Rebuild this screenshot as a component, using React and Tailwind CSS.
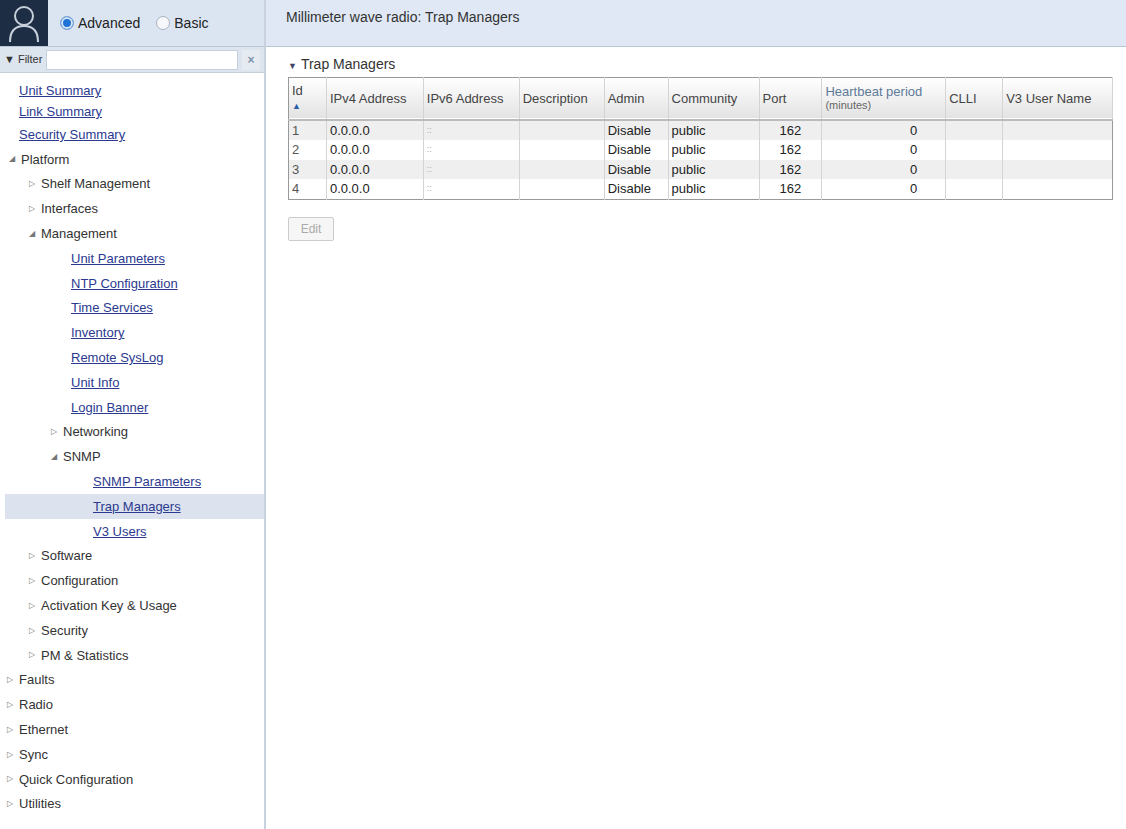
const tree = [
  { t: "Unit Summary", l: 14, link: true, h: 20 },
  { t: "Link Summary", l: 14, link: true, h: 22 },
  { t: "Security Summary", l: 14, link: true, h: 24 },
  { t: "Platform", l: 4, open: true },
  { t: "Shelf Management", l: 24, closed: true },
  { t: "Interfaces", l: 24, closed: true },
  { t: "Management", l: 24, open: true },
  { t: "Unit Parameters", l: 66, link: true },
  { t: "NTP Configuration", l: 66, link: true },
  { t: "Time Services", l: 66, link: true },
  { t: "Inventory", l: 66, link: true },
  { t: "Remote SysLog", l: 66, link: true },
  { t: "Unit Info", l: 66, link: true },
  { t: "Login Banner", l: 66, link: true },
  { t: "Networking", l: 46, closed: true },
  { t: "SNMP", l: 46, open: true },
  { t: "SNMP Parameters", l: 88, link: true },
  { t: "Trap Managers", l: 88, link: true, sel: true },
  { t: "V3 Users", l: 88, link: true },
  { t: "Software", l: 24, closed: true },
  { t: "Configuration", l: 24, closed: true },
  { t: "Activation Key & Usage", l: 24, closed: true },
  { t: "Security", l: 24, closed: true },
  { t: "PM & Statistics", l: 24, closed: true },
  { t: "Faults", l: 2, closed: true },
  { t: "Radio", l: 2, closed: true },
  { t: "Ethernet", l: 2, closed: true },
  { t: "Sync", l: 2, closed: true },
  { t: "Quick Configuration", l: 2, closed: true },
  { t: "Utilities", l: 2, closed: true },
];

const cols = [
  ["Id", 38], ["IPv4 Address", 97], ["IPv6 Address", 96], ["Description", 85], ["Admin", 64],
  ["Community", 91], ["Port", 63], ["Heartbeat period", 124], ["CLLI", 57], ["V3 User Name", 110],
];

export default function App() {
  const font = { fontFamily: '"Liberation Sans", Arial, sans-serif' };
  return (
    <div className="w-[1126px] h-[829px] flex bg-white overflow-hidden text-[13px] text-[#222]" style={font}>
      <div className="w-[266px] shrink-0 flex flex-col border-r-2 border-[#c9d3df]">
        <div className="h-[47px] flex items-center bg-[#dbe5f2] border-b border-[#b9c6d6]">
          <div className="w-[48px] h-[46px] bg-[#1d2d44] flex items-center justify-center">
            <svg width="34" height="40" viewBox="0 0 34 40" fill="none" stroke="#c8d0dc" strokeWidth="2">
              <circle cx="17" cy="13" r="9" />
              <path d="M3 39 C3 26 10 23 17 23 C24 23 31 26 31 39" />
            </svg>
          </div>
          <div className="flex items-center gap-1 ml-3 text-[14px]">
            <span className="w-[14px] h-[14px] rounded-full border border-[#7aa2d4] bg-[#1f73d6] shadow-[inset_0_0_0_2px_#d7e6f8]" />
            <span className="mr-3">Advanced</span>
            <span className="w-[14px] h-[14px] rounded-full border border-[#aab4c0] bg-[#f5f7fa]" />
            <span>Basic</span>
          </div>
        </div>
        <div className="h-[26px] flex items-center bg-[#dce4ee] px-1 gap-1 border-b border-[#c6d0dc]">
          <span className="text-[11px] font-bold text-[#333]">▼ <span className="font-normal">Filter</span></span>
          <div className="flex-1 h-[20px] bg-white border border-[#c6d0dc]" />
          <span className="w-[18px] h-[20px] bg-[#e6ebf1] text-[#7b93ad] text-[12px] font-bold flex items-center justify-center">×</span>
        </div>
        <div className="flex flex-col pt-[8px] pl-[5px]">
          {tree.map((n, i) => (
            <div key={i} className={`relative flex items-center ${n.sel ? "bg-[#dce3ee]" : ""}`} style={{ height: n.h || 24.8, paddingLeft: n.l }}>
              {(n.open || n.closed) && (
                <span className="text-[8px] text-[#777] w-[10px] mr-[2px]">{n.open ? "◢" : "▷"}</span>
              )}
              <span className={n.link ? "text-[#2b3a8f] underline" : "text-[#333]"}>{n.t}</span>
            </div>
          ))}
        </div>
      </div>
      <div className="flex-1 flex flex-col">
        <div className="h-[47px] bg-[#dfe8f4] border-b border-[#b9c6d6] pl-[20px] pt-[7px] text-[14px] text-[#333]">
          Millimeter wave radio: Trap Managers
        </div>
        <div className="pl-[22px] pt-[7px]">
          <div className="text-[14px] text-[#333] mb-[2px]"><span className="text-[9px] text-[#446] mr-1">▼</span>Trap Managers</div>
          <table className="border border-[#999] border-collapse text-[13px] w-[825px]">
            <thead>
              <tr className="h-[42px] bg-gradient-to-b from-[#ffffff] to-[#e3e3e3] border-b-2 border-[#bbb]">
                {cols.map(([c, w], i) => (
                  <th key={i} className="font-normal text-left align-middle px-[3px] border-r border-[#d4d4d4] text-[#444]" style={{ width: w }}>
                    {i === 0 ? (
                      <div className="leading-[14px] self-start">Id<br /><span className="text-[#2b5ea8] text-[9px]">▲</span></div>
                    ) : i === 7 ? (
                      <div className="leading-[13px] text-[#5d7a99]">Heartbeat period<br /><span className="text-[11px] text-[#666]">(minutes)</span></div>
                    ) : c}
                  </th>
                ))}
              </tr>
            </thead>
            <tbody>
              {[1, 2, 3, 4].map((r) => (
                <tr key={r} className={`h-[18px] ${r % 2 ? "bg-[#efefef]" : "bg-white"}`}>
                  <td className="px-[3px] border-r border-[#d4d4d4] text-[#555]">{r}</td>
                  <td className="px-[3px] border-r border-[#d4d4d4]">0.0.0.0</td>
                  <td className="px-[3px] border-r border-[#d4d4d4] text-[#aaa] text-[9px]">::</td>
                  <td className="px-[3px] border-r border-[#d4d4d4]"></td>
                  <td className="px-[3px] border-r border-[#d4d4d4]">Disable</td>
                  <td className="px-[3px] border-r border-[#d4d4d4]">public</td>
                  <td className="px-[3px] border-r border-[#d4d4d4] text-center">162</td>
                  <td className="px-[28px] border-r border-[#d4d4d4] text-right">0</td>
                  <td className="px-[3px] border-r border-[#d4d4d4]"></td>
                  <td className="px-[3px]"></td>
                </tr>
              ))}
            </tbody>
          </table>
          <button className="mt-[17px] w-[46px] h-[24px] border border-[#ccc] rounded-[2px] bg-[#f6f6f6] text-[#aaa] text-[12px]">Edit</button>
        </div>
      </div>
    </div>
  );
}
